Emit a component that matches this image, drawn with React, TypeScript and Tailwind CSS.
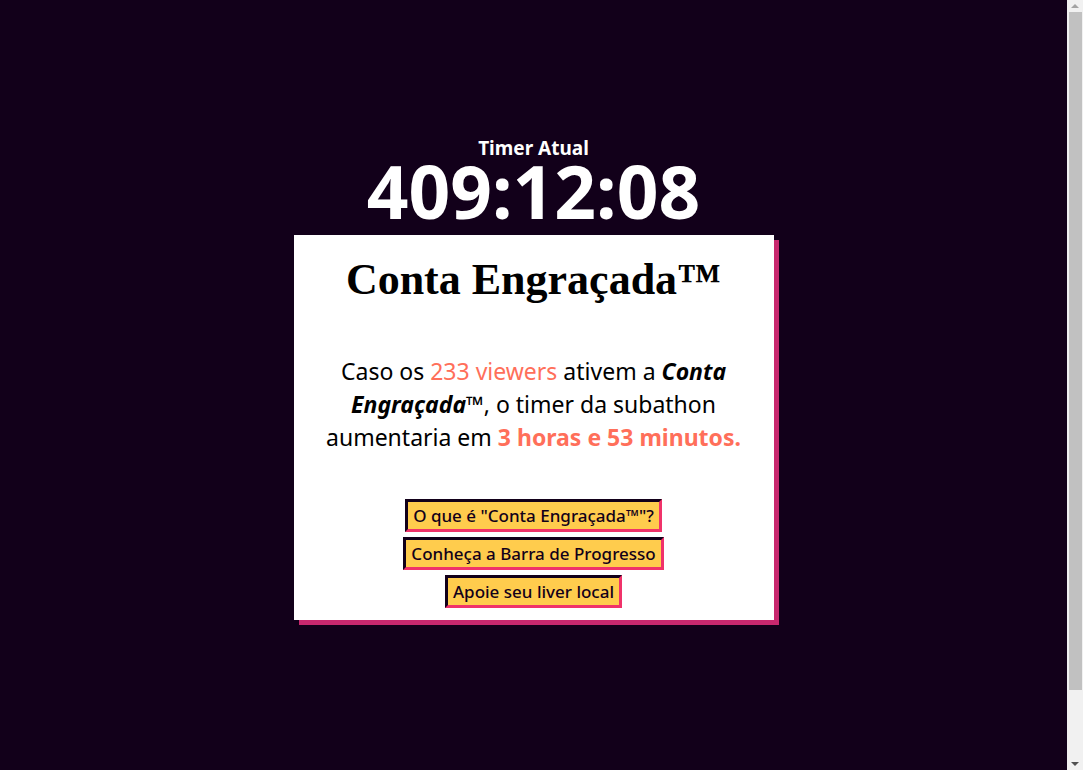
const buttons = [
  'O que é "Conta Engraçada™"?',
  "Conheça a Barra de Progresso",
  "Apoie seu liver local",
]

function Scrollbar() {
  return (
    <div className="w-[16px] h-full bg-[#f1f1f1] flex flex-col items-center">
      <svg width="16" height="12" viewBox="0 0 16 12" className="shrink-0">
        <path d="M4 8 L8 4 L12 8 Z" fill="#a3a3a3" />
      </svg>
      <div className="w-[13px] h-[678px] bg-[#c1c1c1]" />
      <div className="flex-1" />
      <svg width="16" height="12" viewBox="0 0 16 12" className="shrink-0">
        <path d="M4 4 L12 4 L8 8 Z" fill="#505050" />
      </svg>
    </div>
  )
}

export default function App() {
  return (
    <div className="h-[770px] flex overflow-hidden bg-[#12001a]">
      <div
        className="flex-1 flex flex-col items-center pt-[136px]"
        style={{ fontFamily: '"Noto Sans", Inter, sans-serif' }}
      >
        {/* Timer */}
        <div className="text-[19px] font-bold leading-[24px] text-white">Timer Atual</div>
        <div className="text-[73px] font-bold leading-[70px] text-white mt-[-4px]">409:12:08</div>

        {/* Card */}
        <div className="mt-[9px] w-[480px] bg-white shadow-[5px_5px_0_#c8286e] flex flex-col items-center px-[28px] pt-[18px] pb-[12px]">
          <h1
            className="text-[44px] font-bold leading-[54px] text-black whitespace-nowrap"
            style={{ fontFamily: '"Liberation Serif", "DejaVu Serif", serif' }}
          >
            Conta Engraçada™
          </h1>
          <p className="mt-[48px] text-center text-[23px] leading-[33px] text-black">
            Caso os <span className="text-[#ff6f5a]">233 viewers</span> ativem a{" "}
            <em className="font-bold">Conta Engraçada™</em>, o timer da subathon aumentaria em{" "}
            <span className="font-bold text-[#ff6f5a]">3 horas e 53 minutos.</span>
          </p>
          <div className="mt-[45px] flex flex-col items-center gap-[5px]">
            {buttons.map((b) => (
              <button
                key={b}
                className="bg-[#ffcc4d] border-[3px] border-t-[#12001a] border-l-[#12001a] border-b-[#f0326a] border-r-[#f0326a] px-[5px] h-[33px] text-[17px] leading-[27px] font-medium text-[#12001a]"
              >
                {b}
              </button>
            ))}
          </div>
        </div>
      </div>
      <Scrollbar />
    </div>
  )
}
